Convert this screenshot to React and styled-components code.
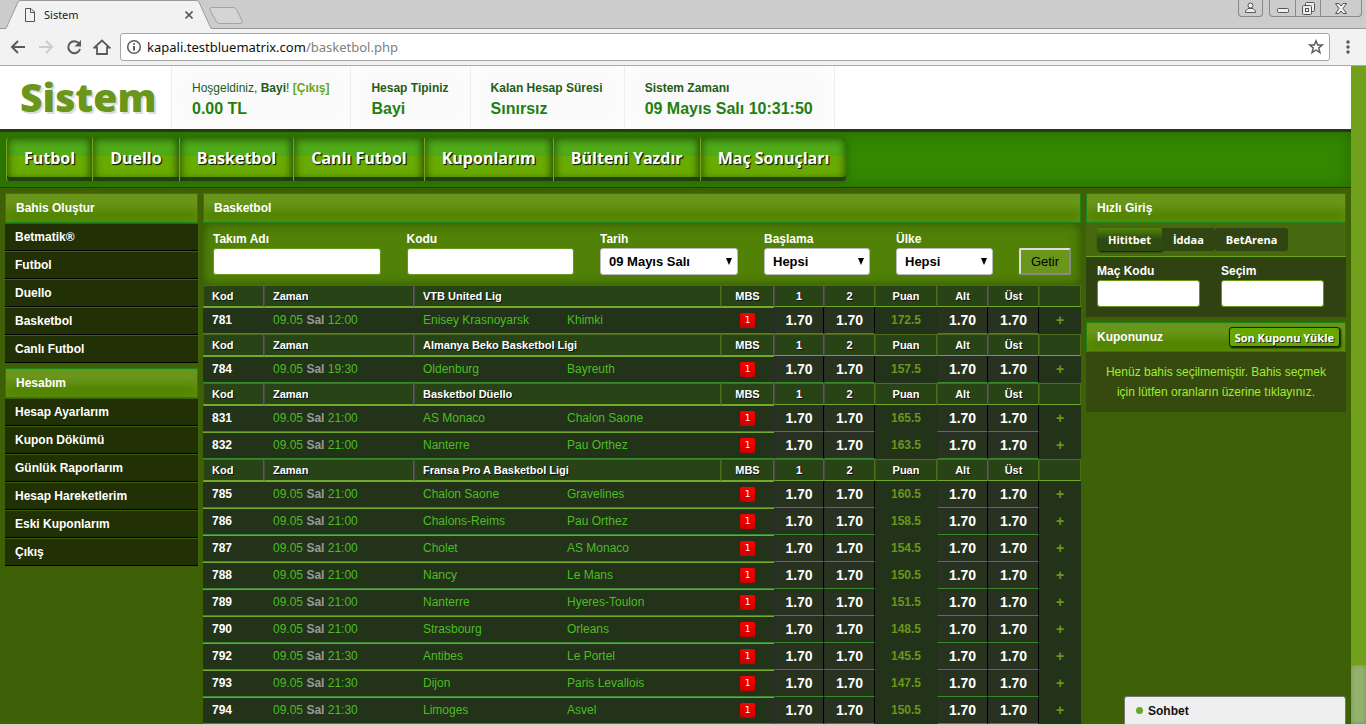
import React from "react";
import styled, { createGlobalStyle } from "styled-components";

const Global = createGlobalStyle`
  *, *::before, *::after { box-sizing: border-box; }
  body { margin: 0; overflow: hidden; font-family: "Liberation Sans", Arial, sans-serif; font-size: 12px; color: #fff; }
  a { color: inherit; text-decoration: none; }
  h1, h2, ul { margin: 0; padding: 0; list-style: none; font-size: inherit; }
  button, input, select { font-family: inherit; margin: 0; }
`;

/* Browser window */
const Window = styled.div`
  display: flex;
  flex-direction: column;
  height: 100vh;
  overflow: hidden;
  border-bottom: 1px solid #d4d0c8;
`;
const TabStrip = styled.div`
  position: relative;
  display: flex;
  flex: none;
  height: 29px;
  background: #ccc;
  border-bottom: 1px solid #999;
`;
const BrowserTab = styled.div`
  position: relative;
  z-index: 1;
  display: flex;
  align-items: center;
  width: 216px;
  height: 29px;
  padding: 0 21px 0 25px;
  color: #222;
`;
const TabShape = styled.svg`
  position: absolute;
  inset: 0;
  z-index: -1;
`;
const TabTitle = styled.span`
  flex: 1;
  padding-left: 9px;
  font: 11px/28px "Noto Sans", "Open Sans", sans-serif;
`;
const IconButton = styled.button`
  display: flex;
  align-items: center;
  justify-content: center;
  flex: none;
  width: ${(p) => p.$w || 28}px;
  height: ${(p) => p.$h || 28}px;
  padding: 0;
  border: 0;
  background: none;
`;
const NewTab = styled(IconButton)`
  margin: 4px 0 0 -8px;
`;
const WindowButtons = styled.div`
  display: flex;
  margin-left: auto;
  padding-right: 4px;
`;
const WindowGroup = styled.div`
  display: flex;
  height: 17px;
  margin-left: 6px;
  border: 1px solid #888;
  border-top: 0;
  border-radius: 0 0 4px 4px;
  button + button { border-left: 1px solid #888; }
`;
const Toolbar = styled.div`
  display: flex;
  align-items: center;
  flex: none;
  height: 37px;
  padding: 0 4px;
  background: #f2f2f2;
  border-bottom: 1px solid #aaa;
`;
const AddressBar = styled.div`
  display: flex;
  align-items: center;
  flex: 1;
  height: 28px;
  margin: 0 4px;
  padding: 0 5px;
  background: #fff;
  border: 1px solid #a6a6a6;
  border-radius: 3px;
`;
const Address = styled.div`
  flex: 1;
  padding-left: 5px;
  font: 13px/24px "Noto Sans", "Open Sans", sans-serif;
  color: #111;
  span { color: #808080; }
`;

/* Page */
const Viewport = styled.div`
  position: relative;
  display: flex;
  flex: 1;
  min-height: 0;
`;
const Page = styled.div`
  flex: 1;
  min-width: 0;
  overflow: hidden;
  background: #3e6006;
`;
const ScrollTrack = styled.div`
  display: flex;
  flex-direction: column;
  justify-content: flex-end;
  width: 15px;
  background: #70a01c;
`;
const ScrollThumb = styled.div`
  height: 59px;
  background: #94b06c;
  box-shadow: inset 0 0 4px rgba(0, 0, 0, 0.2);
`;
const Header = styled.header`
  display: flex;
  height: 66px;
  background: #fff;
  border-bottom: 3px solid #26391b;
`;
const Logo = styled.h1`
  width: 172px;
  padding-left: 20px;
  border-right: 1px solid #eee;
  font: 800 39px/62px "Open Sans", sans-serif;
  color: #69961b;
  text-shadow: 2px 2px 0 #ddd;
`;
const InfoBox = styled.div`
  padding: 13px 21px 0 20px;
  border-right: 1px solid #eee;
  background: #fafafa;
  box-shadow: inset 0 0 20px #fff;
  line-height: 18px;
  color: #265c17;
  a { color: #69a51b; }
`;
const InfoValue = styled.div`
  font-size: 16px;
  font-weight: bold;
  line-height: 24px;
  color: #1f8011;
`;
const Nav = styled.nav`
  display: flex;
  height: 56px;
  padding: 6px;
  background: #380;
  border-bottom: 1px solid #26391b;
  box-shadow: inset 0 0 16px rgba(30, 60, 0, 0.4);
`;
const NavLink = styled.a`
  height: 43px;
  padding: 0 17px;
  border-left: 1px solid #79a31b;
  background: linear-gradient(#50ab18 18px, #69ab00 18px);
  box-shadow: inset 0 -4px 0 #234010, inset 0 0 8px 1px rgba(20, 50, 0, 0.75), 0 0 8px rgba(20, 50, 0, 0.4);
  font: bold 16px/40px "Open Sans", sans-serif;
  text-shadow: 1px 1px 1px #112200, 1px 1px 0 #203010;
  white-space: nowrap;
  &:first-child { border-radius: 3px 0 0 3px; }
  &:last-child { border-radius: 0 3px 3px 0; }
`;
const Columns = styled.div`
  display: flex;
  align-items: flex-start;
  gap: 5px;
  padding: 5px;
`;
const Side = styled.aside`
  display: flex;
  flex-direction: column;
  flex: none;
  gap: 5px;
  width: ${(p) => p.$w}px;
`;
const Main = styled.main`
  flex: 1;
  min-width: 0;
`;
const PanelHead = styled.h2`
  display: flex;
  align-items: center;
  justify-content: space-between;
  height: 30px;
  padding: 0 5px 0 10px;
  border: 1px solid #1e8219;
  background: linear-gradient(#69961b 30%, #528500 75%);
  box-shadow: inset 0 0 10px rgba(105, 150, 27, 0.6);
  font-weight: bold;
`;
const MenuItem = styled.a`
  display: block;
  height: 28px;
  padding-left: 10px;
  border-top: 1px solid #3e5f0c;
  border-bottom: 1px solid #000;
  background: #223005;
  font-weight: bold;
  line-height: 26px;
`;

/* Filter bar */
const Filters = styled.form`
  display: flex;
  align-items: flex-end;
  gap: 26px;
  height: 62px;
  padding: 0 10px 10px;
  background: #518207;
  box-shadow: inset 0 0 12px rgba(40, 70, 0, 0.8);
`;
const Field = styled.label`
  display: flex;
  flex-direction: column;
  flex: ${(p) => (p.$w ? "none" : 1)};
  width: ${(p) => (p.$w ? p.$w + "px" : "auto")};
  min-width: 0;
  font-weight: bold;
  line-height: 18px;
`;
const TextInput = styled.input`
  width: 100%;
  height: 27px;
  border: 1px solid #69961b;
  border-radius: 3px;
  background: #fff;
`;
const Select = styled.select`
  appearance: none;
  width: 100%;
  height: 27px;
  padding: 0 8px;
  border: 1px solid #bbb;
  border-radius: 3px;
  background: #fff url("data:image/svg+xml,%3Csvg xmlns='http://www.w3.org/2000/svg' width='6' height='7'%3E%3Cpath d='M0 0h6L3 7z'/%3E%3C/svg%3E") no-repeat right 5px center;
  color: #000;
  font-size: 13px;
  font-weight: bold;
`;
const FetchButton = styled.button`
  flex: none;
  width: 52px;
  height: 27px;
  padding: 0;
  border: 2px solid;
  border-color: #ddd #888 #888 #ddd;
  border-radius: 2px;
  background: #69961b;
  color: #000;
  font-size: 13px;
`;

/* Odds table */
const Table = styled.table`
  width: 100%;
  table-layout: fixed;
  border-collapse: separate;
  border-spacing: 0;
`;
const Head = styled.th`
  height: 22px;
  padding: ${(p) => (p.$left ? "0 0 0 8px" : "0")};
  border: 1px solid #4e6d1c;
  border-left-color: #4a4a4a;
  border-bottom-color: #74aa2c;
  background: #284416;
  font-size: 11px;
  text-align: ${(p) => (p.$left ? "left" : "center")};
  text-shadow: 1px 1px 0 #111;
`;
const Cell = styled.td`
  height: 27px;
  padding: 0 0 1px 9px;
  border-top: 1px solid #74aa2c;
  border-bottom: 1px solid #388a2c;
  background: #223319;
  color: #4cbd22;
`;
const KodCell = styled(Cell)`
  color: #fff;
  font-weight: bold;
`;
const MbsCell = styled(Cell)`
  padding: 0;
  line-height: 15px;
  text-align: center;
`;
const OddCell = styled(Cell)`
  padding: 0 0 1px;
  border-top-color: #2a2a2a;
  border-left: 1px solid #2a2a2a;
  border-right: 1px solid #000;
  background: #27331e;
  color: #fff;
  font-size: 14px;
  font-weight: bold;
  line-height: 16px;
  text-align: center;
`;
const PlainCell = styled(Cell)`
  padding: 0 0 1px;
  border-color: #223319;
  color: #69961b;
  font-size: ${(p) => (p.$big ? 14 : 12)}px;
  font-weight: bold;
  line-height: 16px;
  text-align: center;
`;
const Day = styled.b`
  color: #999;
`;
const Badge = styled.span`
  display: inline-block;
  width: 15px;
  height: 15px;
  border-radius: 2px;
  background: linear-gradient(#f00, #c00);
  color: #fff;
  font: 9px/15px "DejaVu Sans", sans-serif;
  vertical-align: top;
`;

/* Right column */
const Tabs = styled.div`
  display: flex;
  align-items: center;
  height: 34px;
  padding-left: 11px;
  background: #46690f;
  border-bottom: 1px solid #69a51b;
`;
const Tab = styled.button`
  height: 23px;
  padding: 0 11px;
  border: 0;
  border-radius: 3px;
  background: ${(p) => (p.$active ? "linear-gradient(#4f850a, #2f4a0e 50%)" : "#304511")};
  box-shadow: ${(p) => (p.$active ? "1px 1px 2px #111" : "none")};
  color: #fff;
  font: bold 11px "Open Sans", sans-serif;
`;
const QuickForm = styled.div`
  display: flex;
  gap: 21px;
  height: 60px;
  padding: 5px 11px;
  background: #304211;
`;
const LoadButton = styled.button`
  height: 20px;
  padding: 0 5px;
  border: 1px solid #182500;
  border-radius: 3px;
  background: #64a800;
  box-shadow: 1px 1px 2px #111;
  color: #fff;
  font: bold 11px "Open Sans", sans-serif;
  text-shadow: 1px 1px 0 #333;
`;
const Message = styled.p`
  margin: 0;
  padding: 10px 12px;
  background: #36490e;
  color: #a0ee30;
  line-height: 20px;
  text-align: center;
`;
const Chat = styled.button`
  position: absolute;
  right: 20px;
  bottom: 0;
  display: flex;
  align-items: center;
  gap: 5px;
  width: 222px;
  height: 28px;
  padding: 0 11px;
  border: 1px solid #777;
  border-bottom: 0;
  border-radius: 3px 3px 0 0;
  background: #efefef;
  color: #111;
  font-size: 12px;
  font-weight: bold;
  &::before { content: ""; width: 7px; height: 7px; border-radius: 50%; background: #63a829; }
`;

const INFO = [
  ["Hesap Tipiniz", "Bayi"],
  ["Kalan Hesap Süresi", "Sınırsız"],
  ["Sistem Zamanı", "09 Mayıs Salı 10:31:50"],
];
const NAV = ["Futbol", "Duello", "Basketbol", "Canlı Futbol", "Kuponlarım", "Bülteni Yazdır", "Maç Sonuçları"];
const MENUS = [
  ["Bahis Oluştur", ["Betmatik®", "Futbol", "Duello", "Basketbol", "Canlı Futbol"]],
  ["Hesabım", ["Hesap Ayarlarım", "Kupon Dökümü", "Günlük Raporlarım", "Hesap Hareketlerim", "Eski Kuponlarım", "Çıkış"]],
];
const LEAGUES = [
  ["VTB United Lig", [["781", "12:00", "Enisey Krasnoyarsk", "Khimki", "172.5"]]],
  ["Almanya Beko Basketbol Ligi", [["784", "19:30", "Oldenburg", "Bayreuth", "157.5"]]],
  ["Basketbol Düello", [
    ["831", "21:00", "AS Monaco", "Chalon Saone", "165.5"],
    ["832", "21:00", "Nanterre", "Pau Orthez", "163.5"],
  ]],
  ["Fransa Pro A Basketbol Ligi", [
    ["785", "21:00", "Chalon Saone", "Gravelines", "160.5"],
    ["786", "21:00", "Chalons-Reims", "Pau Orthez", "158.5"],
    ["787", "21:00", "Cholet", "AS Monaco", "154.5"],
    ["788", "21:00", "Nancy", "Le Mans", "150.5"],
    ["789", "21:00", "Nanterre", "Hyeres-Toulon", "151.5"],
    ["790", "21:00", "Strasbourg", "Orleans", "148.5"],
    ["792", "21:30", "Antibes", "Le Portel", "145.5"],
    ["793", "21:30", "Dijon", "Paris Levallois", "147.5"],
    ["794", "21:30", "Limoges", "Asvel", "150.5"],
  ]],
];
const COLUMNS = [61, 150, 144, null, 53, 50, 51, 62, 51, 51, 42];

const line = { fill: "none", stroke: "#5a5a5a", strokeWidth: 2 };
const thin = { fill: "none", stroke: "#555", strokeWidth: 1 };

function Browser({ children }) {
  return (
    <Window>
      <TabStrip>
        <BrowserTab>
          <TabShape width="216" height="29">
            <path d="M0 29 L6 28 L18 2 Q19 .5 21 .5 H196 Q198 .5 199 2 L211 28 L216 29Z" fill="#f2f2f2" />
            <path d="M0 28.5 H6 L18 2 Q19 .5 21 .5 H196 Q198 .5 199 2 L211 28.5 H216" fill="none" stroke="#999" />
          </TabShape>
          <svg width="10" height="14"><path d="M.5 .5H6L9.500 4V13.500H.5ZM5.500 .5V4.500H9.500" {...thin} /></svg>
          <TabTitle>Sistem</TabTitle>
          <IconButton $w={12} aria-label="Kapat">
            <svg width="8" height="8"><path d="M.5 .5 7.500 7.500M7.500 .5 .5 7.500" {...line} strokeWidth="1.600" /></svg>
          </IconButton>
        </BrowserTab>
        <NewTab $w={36} $h={20} aria-label="Yeni sekme">
          <svg width="36" height="20"><path d="M3.500 3.500H25Q28 3.500 29 6L34 17Q35 19.500 32 19.500H12Q9 19.500 8 17L2 6Q1 3.500 3.500 3.500Z" fill="#d4d4d4" stroke="#a3a3a3" /></svg>
        </NewTab>
        <WindowButtons>
          <WindowGroup>
            <IconButton $w={23} $h={16} aria-label="Kullanıcı">
              <svg width="11" height="12"><circle cx="5.500" cy="3.500" r="2.500" {...thin} fill="#eee" /><path d="M.5 10.500V9L3 6.500H8L10.500 9V10.500Z" {...thin} fill="#eee" /></svg>
            </IconButton>
          </WindowGroup>
          <WindowGroup>
            <IconButton $w={25} $h={16} aria-label="Küçült">
              <svg width="12" height="12"><rect x=".5" y="6.500" width="11" height="4" rx="1" {...thin} fill="#eee" /></svg>
            </IconButton>
            <IconButton $w={25} $h={16} aria-label="Geri yükle">
              <svg width="13" height="13"><rect x="3.500" y=".5" width="9" height="9" rx="1" {...thin} fill="#eee" /><rect x=".5" y="3.500" width="9" height="9" rx="1" {...thin} fill="#eee" /><rect x="3.500" y="6.500" width="3" height="3" {...thin} /></svg>
            </IconButton>
            <IconButton $w={41} $h={16} aria-label="Pencereyi kapat">
              <svg width="12" height="11"><path d="M.5 .5H4L6 3 8 .5H11.500L8 5.500 11.500 10.500H8L6 8 4 10.500H.5L4 5.500Z" {...thin} fill="#eee" /></svg>
            </IconButton>
          </WindowGroup>
        </WindowButtons>
      </TabStrip>
      <Toolbar>
        <IconButton aria-label="Geri"><svg width="16" height="16"><path d="M15 8H2M8 2 2 8 8 14" {...line} /></svg></IconButton>
        <IconButton aria-label="İleri"><svg width="16" height="16"><path d="M1 8H14M8 2 14 8 8 14" {...line} stroke="#ccc" /></svg></IconButton>
        <IconButton aria-label="Yenile">
          <svg width="16" height="16"><path d="M13 4.500A6 6 0 1 0 14 10" {...line} /><path d="M15 1V7.500H8.500Z" fill="#5a5a5a" /></svg>
        </IconButton>
        <IconButton aria-label="Ana sayfa"><svg width="18" height="16"><path d="M1.500 8.500 9 1.500 16.500 8.500H14V15H4V8.500Z" {...line} strokeWidth="1.800" /></svg></IconButton>
        <AddressBar>
          <svg width="16" height="16"><circle cx="8" cy="8" r="6.300" {...line} strokeWidth="1.500" /><path d="M8 7V11.500M8 4.200V5.800" {...line} /></svg>
          <Address>kapali.testbluematrix.com<span>/basketbol.php</span></Address>
          <svg width="16" height="16"><path d="M8 1.800 9.700 6H14.300L10.700 9 12 13.600 8 11 4 13.600 5.300 9 1.700 6H6.300Z" {...line} strokeWidth="1.400" /></svg>
        </AddressBar>
        <IconButton aria-label="Menü"><svg width="4" height="16"><g fill="#5a5a5a"><circle cx="2" cy="3" r="1.700" /><circle cx="2" cy="8" r="1.700" /><circle cx="2" cy="13" r="1.700" /></g></svg></IconButton>
      </Toolbar>
      {children}
    </Window>
  );
}

function OddsTable() {
  return (
    <Table>
      <colgroup>{COLUMNS.map((w, i) => <col key={i} width={w || undefined} />)}</colgroup>
      {LEAGUES.map(([league, games]) => (
        <tbody key={league}>
          <tr>
            <Head $left>Kod</Head>
            <Head $left>Zaman</Head>
            <Head $left colSpan={2}>{league}</Head>
            {["MBS", "1", "2", "Puan", "Alt", "Üst", ""].map((t) => <Head key={t}>{t}</Head>)}
          </tr>
          {games.map(([code, time, home, away, points]) => (
            <tr key={code}>
              <KodCell>{code}</KodCell>
              <Cell>09.05 <Day>Sal</Day> {time}</Cell>
              <Cell>{home}</Cell>
              <Cell>{away}</Cell>
              <MbsCell><Badge>1</Badge></MbsCell>
              <OddCell>1.70</OddCell>
              <OddCell>1.70</OddCell>
              <PlainCell>{points}</PlainCell>
              <OddCell>1.70</OddCell>
              <OddCell>1.70</OddCell>
              <PlainCell $big>+</PlainCell>
            </tr>
          ))}
        </tbody>
      ))}
    </Table>
  );
}

export default function App() {
  return (
    <Browser>
      <Global />
      <Viewport>
        <Page>
          <Header>
            <Logo>Sistem</Logo>
            <InfoBox>
              Hoşgeldiniz, <b>Bayi</b>! <a href="#cikis"><b>[Çıkış]</b></a>
              <InfoValue>0.00 TL</InfoValue>
            </InfoBox>
            {INFO.map(([label, value]) => (
              <InfoBox key={label}><b>{label}</b><InfoValue>{value}</InfoValue></InfoBox>
            ))}
          </Header>
          <Nav>{NAV.map((t) => <NavLink key={t} href="#">{t}</NavLink>)}</Nav>
          <Columns>
            <Side $w={193}>
              {MENUS.map(([title, items]) => (
                <section key={title}>
                  <PanelHead>{title}</PanelHead>
                  <ul>{items.map((t) => <li key={t}><MenuItem href="#">{t}</MenuItem></li>)}</ul>
                </section>
              ))}
            </Side>
            <Main>
              <PanelHead>Basketbol</PanelHead>
              <Filters>
                <Field>Takım Adı<TextInput /></Field>
                <Field>Kodu<TextInput /></Field>
                <Field $w={138}>Tarih<Select><option>09 Mayıs Salı</option></Select></Field>
                <Field $w={106}>Başlama<Select><option>Hepsi</option></Select></Field>
                <Field $w={97}>Ülke<Select><option>Hepsi</option></Select></Field>
                <FetchButton type="button">Getir</FetchButton>
              </Filters>
              <OddsTable />
            </Main>
            <Side $w={260}>
              <section>
                <PanelHead>Hızlı Giriş</PanelHead>
                <Tabs>
                  <Tab $active>Hititbet</Tab>
                  <Tab>İddaa</Tab>
                  <Tab>BetArena</Tab>
                </Tabs>
                <QuickForm>
                  <Field $w={103}>Maç Kodu<TextInput /></Field>
                  <Field $w={103}>Seçim<TextInput /></Field>
                </QuickForm>
              </section>
              <section>
                <PanelHead>Kuponunuz<LoadButton>Son Kuponu Yükle</LoadButton></PanelHead>
                <Message>Henüz bahis seçilmemiştir. Bahis seçmek için lütfen oranların üzerine tıklayınız.</Message>
              </section>
            </Side>
          </Columns>
        </Page>
        <ScrollTrack><ScrollThumb /></ScrollTrack>
        <Chat>Sohbet</Chat>
      </Viewport>
    </Browser>
  );
}
